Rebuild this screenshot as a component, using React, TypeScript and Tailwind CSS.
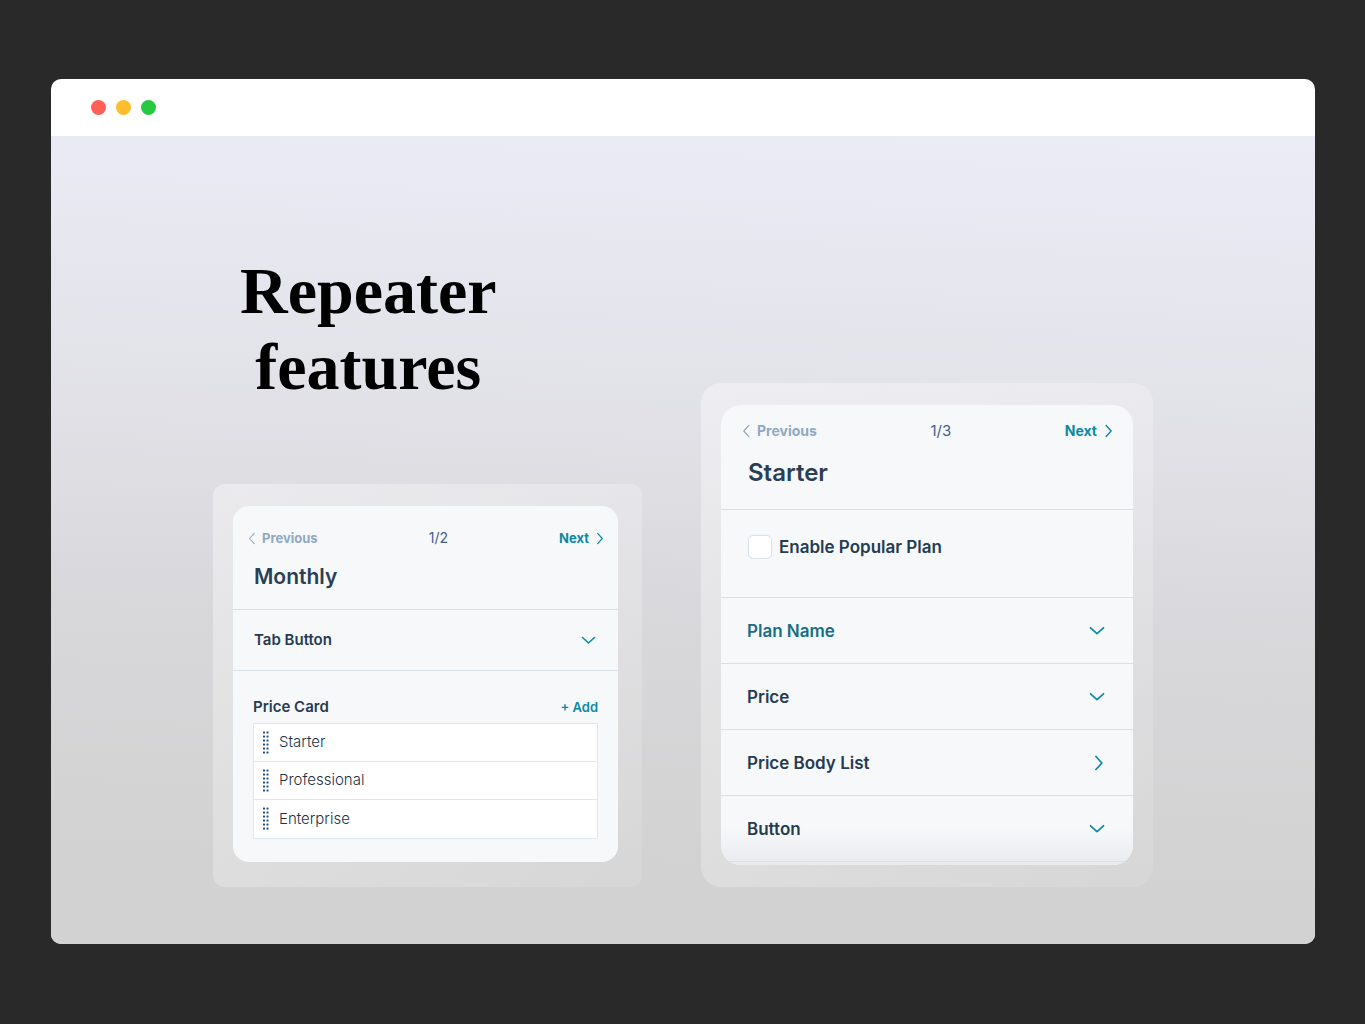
import React from "react";

type Direction = "left" | "right" | "down";

const chevronPaths: Record<Direction, string> = {
  left: "M8.5 0.5 3 6.5 8.5 12.5",
  right: "M5.5 0.5 11 6.5 5.5 12.5",
  down: "M0.5 3.5 6.5 9 12.5 3.5",
};

function Chevron({ direction, className }: { direction: Direction; className: string }) {
  return (
    <svg
      viewBox="0 0 13 13"
      className={`shrink-0 overflow-visible ${className}`}
      fill="none"
      stroke="currentColor"
      aria-hidden="true"
    >
      <path d={chevronPaths[direction]} strokeLinecap="round" strokeLinejoin="round" />
    </svg>
  );
}

function DragHandle() {
  return (
    <svg viewBox="0 0 6 24" className="h-6 w-1.5 shrink-0 fill-[#1f4a7d]" aria-hidden="true">
      {[0, 4, 8, 12, 16, 20].map((y) => (
        <g key={y}>
          <rect x="0" y={y + 0.5} width="2" height="2" rx="0.5" />
          <rect x="3.5" y={y + 0.5} width="2" height="2" rx="0.5" />
        </g>
      ))}
    </svg>
  );
}

function MonthlyPanel() {
  return (
    <section className="rounded-xl bg-linear-to-br from-white/40 to-white/10 pt-[22px] pr-6 pb-[25px] pl-5">
      <div className="overflow-hidden rounded-2xl bg-[#f6f8fa] pb-[23px]">
        <header className="h-[104px] border-b border-[#d5e0ea] px-3.5 pt-[22px]">
          <nav className="flex items-center justify-between text-[13px] leading-5">
            <button className="flex items-center gap-1 font-bold text-[#91a8c3]">
              <Chevron direction="left" className="size-[11px] stroke-[1.3]" />
              Previous
            </button>
            <span className="text-sm leading-5 text-[#425f88]">1/2</span>
            <button className="flex items-center gap-1 font-bold text-[#0c8aa5]">
              Next
              <Chevron direction="right" className="size-[11px] stroke-[1.5]" />
            </button>
          </nav>
          <h2 className="mt-[15px] pl-[7px] text-[21px] leading-7 font-semibold text-[#2a3e54]">Monthly</h2>
        </header>
        <button className="flex h-[61px] w-full items-center justify-between border-b border-[#d8e1e9] pr-[23px] pl-[21px] text-[15px] font-semibold text-[#253b52]">
          Tab Button
          <Chevron direction="down" className="size-[13px] stroke-[1.6] text-[#0c8aa5]" />
        </button>
        <div className="px-5 pt-[26px]">
          <div className="flex h-[26px] items-start justify-between">
            <h3 className="text-[15px] leading-5 font-semibold text-[#253b52]">Price Card</h3>
            <button className="text-[13px] leading-5 font-semibold text-[#0c8aa5]">+ Add</button>
          </div>
          <ul className="divide-y divide-[#dfe7ef] border border-[#dfe7ef] bg-white">
            {["Starter", "Professional", "Enterprise"].map((plan) => (
              <li key={plan} className="flex h-[38px] items-center gap-2.5 pl-[9px] text-[15px] font-light text-[#1b3048]">
                <DragHandle />
                {plan}
              </li>
            ))}
          </ul>
        </div>
      </div>
    </section>
  );
}

const sections: { label: string; direction: Direction; color: string }[] = [
  { label: "Plan Name", direction: "down", color: "text-[#176f80]" },
  { label: "Price", direction: "down", color: "text-[#253b52]" },
  { label: "Price Body List", direction: "right", color: "text-[#253b52]" },
  { label: "Button", direction: "down", color: "text-[#253b52]" },
];

function StarterPanel() {
  return (
    <section className="rounded-[20px] bg-linear-to-br from-white/40 to-white/10 px-5 py-[22px]">
      <div className="overflow-hidden rounded-[20px] bg-[#f6f8fa]">
        <header className="h-[105px] border-b border-[#d5e0ea] px-5 pt-4">
          <nav className="flex items-center justify-between text-sm leading-5">
            <button className="flex items-center gap-1 font-bold text-[#91a8c3]">
              <Chevron direction="left" className="size-3 stroke-[1.3]" />
              Previous
            </button>
            <span className="text-[15px] leading-5 text-[#425f88]">1/3</span>
            <button className="flex items-center gap-1 font-bold text-[#0c8aa5]">
              Next
              <Chevron direction="right" className="size-3 stroke-[1.5]" />
            </button>
          </nav>
          <h2 className="mt-4 pl-[7px] text-2xl font-semibold text-[#2a3e54]">Starter</h2>
        </header>
        <div className="h-[88px] border-b border-[#d8e1e9] pt-[25px] pl-[27px]">
          <label className="flex w-fit items-center gap-[7px] text-[17px] leading-6 font-semibold text-[#253b52]">
            <input
              type="checkbox"
              className="size-6 appearance-none rounded-[5px] border border-[#d5e0ea] bg-white checked:bg-[#0c8aa5]"
            />
            Enable Popular Plan
          </label>
        </div>
        {sections.map(({ label, direction, color }) => (
          <button
            key={label}
            className="flex h-[66px] w-full items-center justify-between border-b border-[#d8e1e9] pr-[29px] pl-[26px] text-[17px] font-semibold last-of-type:bg-linear-to-b last-of-type:from-[#f6f8fa] last-of-type:from-50% last-of-type:to-[#eaecef]"
          >
            <span className={`pt-0.5 ${color}`}>{label}</span>
            <Chevron direction={direction} className="size-3.5 stroke-[1.6] text-[#0c8aa5]" />
          </button>
        ))}
        <div className="h-[3px] bg-[#e9ecef]" />
      </div>
    </section>
  );
}

export default function App() {
  return (
    <div className="min-h-screen bg-[#292929] pt-[79px] pr-[50px] pb-20 pl-[51px] font-['Inter',sans-serif]">
      <div className="overflow-hidden rounded-[10px] bg-white">
        <div className="flex h-[57px] items-center gap-2.5 pl-10">
          <span className="size-[15px] rounded-full bg-[#ff5f57]" />
          <span className="size-[15px] rounded-full bg-[#ffbd2e]" />
          <span className="size-[15px] rounded-full bg-[#28c840]" />
        </div>
        <main className="bg-[linear-gradient(182deg,#ebecf6_0%,#e3e3ea_30%,#d8d8db_60%,#d2d2d2_88%,#d2d2d2_100%)] pt-[117px] pb-[57px]">
          <div className="mx-auto grid w-fit grid-cols-[429px_452px] items-end gap-x-[59px]">
            <div>
              <h1 className="mb-[79px] ml-[27px] w-fit text-center font-['Liberation_Serif',serif] text-[66px] leading-[76px] font-bold text-black">
                Repeater
                <br />
                features
              </h1>
              <MonthlyPanel />
            </div>
            <StarterPanel />
          </div>
        </main>
      </div>
    </div>
  );
}
